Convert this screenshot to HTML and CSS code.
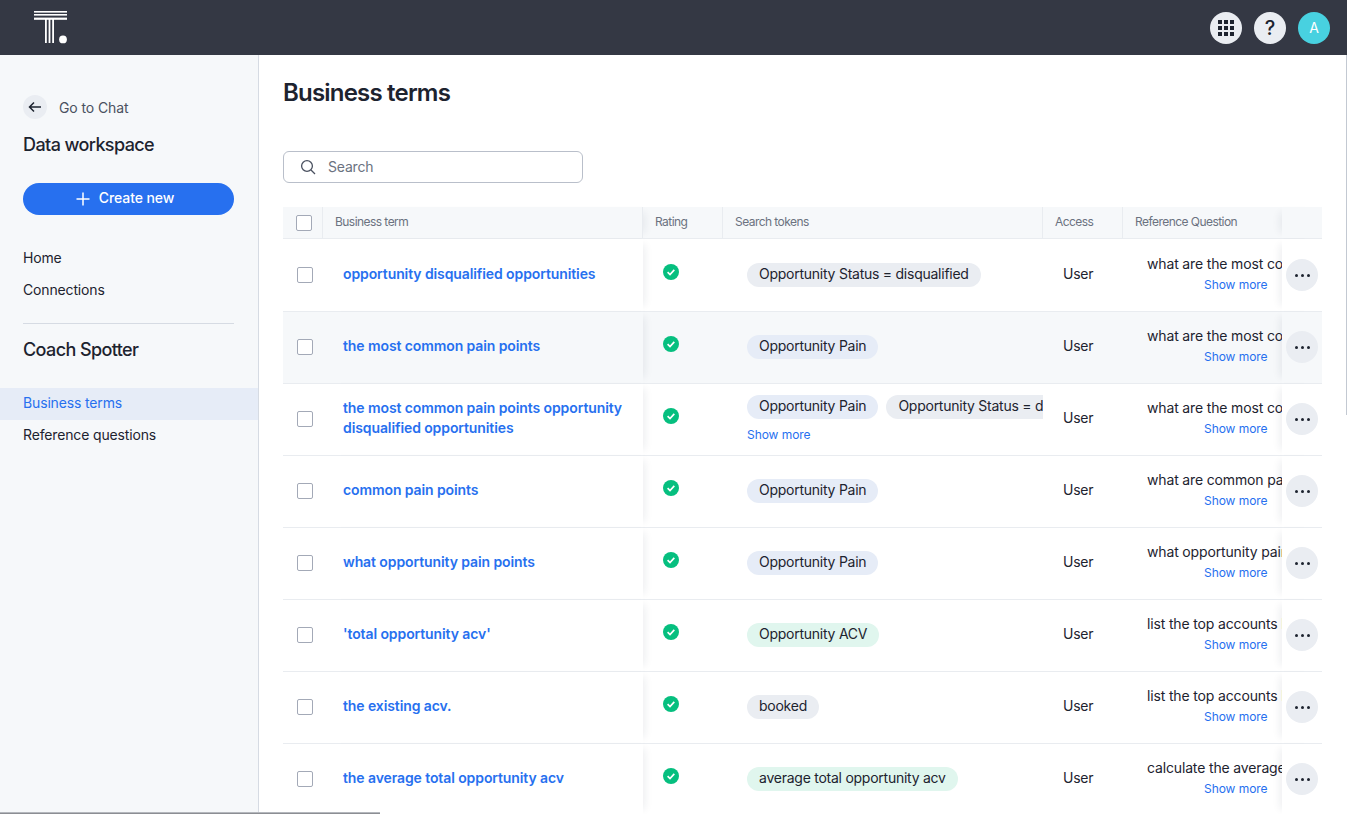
FILE: index.html
```html
<!DOCTYPE html>
<html lang="en">
<head>
  <meta charset="UTF-8" />
  <title>Business terms</title>
  <link rel="stylesheet" href="styles.css">
</head>
<body>

<!-- Top bar -->
<header class="topbar">
  <svg class="logo" width="34" height="34" viewBox="0 0 34 34">
    <rect x="0" y="0" width="33" height="1.6" fill="#fff"/>
    <rect x="0" y="3" width="33" height="1.6" fill="#fff"/>
    <rect x="0" y="6.6" width="33" height="2.2" fill="#fff"/>
    <rect x="11" y="8" width="1.8" height="24" fill="#fff"/>
    <rect x="14.6" y="8" width="1.8" height="24" fill="#fff"/>
    <rect x="18.2" y="8" width="1.8" height="24" fill="#fff"/>
    <circle cx="29" cy="28.4" r="3.9" fill="#fff"/>
  </svg>
  <div class="topbar-actions">
    <div class="round-btn">
      <svg width="18" height="18" viewBox="0 0 18 18" fill="#1d232f">
        <rect x="1" y="1" width="4" height="4"/><rect x="7" y="1" width="4" height="4"/><rect x="13" y="1" width="4" height="4"/>
        <rect x="1" y="7" width="4" height="4"/><rect x="7" y="7" width="4" height="4"/><rect x="13" y="7" width="4" height="4"/>
        <rect x="1" y="13" width="4" height="4"/><rect x="7" y="13" width="4" height="4"/><rect x="13" y="13" width="4" height="4"/>
      </svg>
    </div>
    <div class="round-btn help">?</div>
    <div class="round-btn avatar">A</div>
  </div>
</header>

<div class="layout">
  <!-- Sidebar -->
  <aside class="sidebar">
    <div class="back-row">
      <span class="back-btn">
        <svg width="14" height="12" viewBox="0 0 14 12" fill="none" stroke="#1d232f" stroke-width="1.5">
          <path d="M13 6H1.5M6 1.5 1.5 6 6 10.5"/>
        </svg>
      </span>
      <span>Go to Chat</span>
    </div>
    <h2 class="side-title">Data workspace</h2>
    <button class="create-btn">
      <svg width="14" height="14" viewBox="0 0 14 14" stroke="#fff" stroke-width="1.5"><path d="M7 0.5v13M0.5 7h13"/></svg>
      <span>Create new</span>
    </button>
    <nav class="side-nav">
      <a>Home</a>
      <a>Connections</a>
    </nav>
    <div class="side-divider"></div>
    <h2 class="side-title coach">Coach Spotter</h2>
    <nav class="side-nav sub">
      <a class="active">Business terms</a>
      <a>Reference questions</a>
    </nav>
  </aside>

  <!-- Content -->
  <main class="content">
    <h1>Business terms</h1>
    <div class="search">
      <svg width="16" height="16" viewBox="0 0 16 16" fill="none" stroke="#4a5160" stroke-width="1.3">
        <circle cx="7" cy="7" r="5.4"/><path d="M11 11l4 4"/>
      </svg>
      <span>Search</span>
    </div>

    <div class="table">
      <div class="row head">
        <div class="cell c-check"><span class="checkbox"></span></div>
        <div class="cell c-term">Business term</div>
        <div class="cell c-rating">Rating</div>
        <div class="cell c-tokens">Search tokens</div>
        <div class="cell c-access">Access</div>
        <div class="cell c-ref">Reference Question</div>
        <div class="cell c-more"></div>
      </div>

      <div class="row">
        <div class="cell c-check"><span class="checkbox"></span></div>
        <div class="cell c-term"><a>opportunity disqualified opportunities</a></div>
        <div class="cell c-rating"><svg class="ok" viewBox="0 0 16 16"><circle cx="8" cy="8" r="8" fill="#06bf7f"/><path d="M4.6 8.2l2.4 2.3 4.3-4.6" fill="none" stroke="#fff" stroke-width="1.7"/></svg></div>
        <div class="cell c-tokens"><div class="chips"><span class="chip">Opportunity Status = disqualified</span></div></div>
        <div class="cell c-access">User</div>
        <div class="cell c-ref"><div class="ref-text">what are the most common pain points for disqualified opportunities</div><a class="more-link">Show more</a></div>
        <div class="cell c-more"><span class="dots"><i></i><i></i><i></i></span></div>
      </div>

      <div class="row hover">
        <div class="cell c-check"><span class="checkbox"></span></div>
        <div class="cell c-term"><a>the most common pain points</a></div>
        <div class="cell c-rating"><svg class="ok" viewBox="0 0 16 16"><circle cx="8" cy="8" r="8" fill="#06bf7f"/><path d="M4.6 8.2l2.4 2.3 4.3-4.6" fill="none" stroke="#fff" stroke-width="1.7"/></svg></div>
        <div class="cell c-tokens"><div class="chips"><span class="chip blue">Opportunity Pain</span></div></div>
        <div class="cell c-access">User</div>
        <div class="cell c-ref"><div class="ref-text">what are the most common pain points</div><a class="more-link">Show more</a></div>
        <div class="cell c-more"><span class="dots"><i></i><i></i><i></i></span></div>
      </div>

      <div class="row">
        <div class="cell c-check"><span class="checkbox"></span></div>
        <div class="cell c-term"><a>the most common pain points opportunity disqualified opportunities</a></div>
        <div class="cell c-rating"><svg class="ok" viewBox="0 0 16 16"><circle cx="8" cy="8" r="8" fill="#06bf7f"/><path d="M4.6 8.2l2.4 2.3 4.3-4.6" fill="none" stroke="#fff" stroke-width="1.7"/></svg></div>
        <div class="cell c-tokens"><div class="chips"><span class="chip blue">Opportunity Pain</span><span class="chip">Opportunity Status = disqualified</span></div><a class="more-link">Show more</a></div>
        <div class="cell c-access">User</div>
        <div class="cell c-ref"><div class="ref-text">what are the most common pain points</div><a class="more-link">Show more</a></div>
        <div class="cell c-more"><span class="dots"><i></i><i></i><i></i></span></div>
      </div>

      <div class="row">
        <div class="cell c-check"><span class="checkbox"></span></div>
        <div class="cell c-term"><a>common pain points</a></div>
        <div class="cell c-rating"><svg class="ok" viewBox="0 0 16 16"><circle cx="8" cy="8" r="8" fill="#06bf7f"/><path d="M4.6 8.2l2.4 2.3 4.3-4.6" fill="none" stroke="#fff" stroke-width="1.7"/></svg></div>
        <div class="cell c-tokens"><div class="chips"><span class="chip blue">Opportunity Pain</span></div></div>
        <div class="cell c-access">User</div>
        <div class="cell c-ref"><div class="ref-text">what are common pain points</div><a class="more-link">Show more</a></div>
        <div class="cell c-more"><span class="dots"><i></i><i></i><i></i></span></div>
      </div>

      <div class="row">
        <div class="cell c-check"><span class="checkbox"></span></div>
        <div class="cell c-term"><a>what opportunity pain points</a></div>
        <div class="cell c-rating"><svg class="ok" viewBox="0 0 16 16"><circle cx="8" cy="8" r="8" fill="#06bf7f"/><path d="M4.6 8.2l2.4 2.3 4.3-4.6" fill="none" stroke="#fff" stroke-width="1.7"/></svg></div>
        <div class="cell c-tokens"><div class="chips"><span class="chip blue">Opportunity Pain</span></div></div>
        <div class="cell c-access">User</div>
        <div class="cell c-ref"><div class="ref-text">what opportunity pain points</div><a class="more-link">Show more</a></div>
        <div class="cell c-more"><span class="dots"><i></i><i></i><i></i></span></div>
      </div>

      <div class="row">
        <div class="cell c-check"><span class="checkbox"></span></div>
        <div class="cell c-term"><a>'total opportunity acv'</a></div>
        <div class="cell c-rating"><svg class="ok" viewBox="0 0 16 16"><circle cx="8" cy="8" r="8" fill="#06bf7f"/><path d="M4.6 8.2l2.4 2.3 4.3-4.6" fill="none" stroke="#fff" stroke-width="1.7"/></svg></div>
        <div class="cell c-tokens"><div class="chips"><span class="chip green">Opportunity ACV</span></div></div>
        <div class="cell c-access">User</div>
        <div class="cell c-ref"><div class="ref-text">list the top accounts by total opportunity acv</div><a class="more-link">Show more</a></div>
        <div class="cell c-more"><span class="dots"><i></i><i></i><i></i></span></div>
      </div>

      <div class="row">
        <div class="cell c-check"><span class="checkbox"></span></div>
        <div class="cell c-term"><a>the existing acv.</a></div>
        <div class="cell c-rating"><svg class="ok" viewBox="0 0 16 16"><circle cx="8" cy="8" r="8" fill="#06bf7f"/><path d="M4.6 8.2l2.4 2.3 4.3-4.6" fill="none" stroke="#fff" stroke-width="1.7"/></svg></div>
        <div class="cell c-tokens"><div class="chips"><span class="chip">booked</span></div></div>
        <div class="cell c-access">User</div>
        <div class="cell c-ref"><div class="ref-text">list the top accounts by existing acv</div><a class="more-link">Show more</a></div>
        <div class="cell c-more"><span class="dots"><i></i><i></i><i></i></span></div>
      </div>

      <div class="row">
        <div class="cell c-check"><span class="checkbox"></span></div>
        <div class="cell c-term"><a>the average total opportunity acv</a></div>
        <div class="cell c-rating"><svg class="ok" viewBox="0 0 16 16"><circle cx="8" cy="8" r="8" fill="#06bf7f"/><path d="M4.6 8.2l2.4 2.3 4.3-4.6" fill="none" stroke="#fff" stroke-width="1.7"/></svg></div>
        <div class="cell c-tokens"><div class="chips"><span class="chip green">average total opportunity acv</span></div></div>
        <div class="cell c-access">User</div>
        <div class="cell c-ref"><div class="ref-text">calculate the average total opportunity acv</div><a class="more-link">Show more</a></div>
        <div class="cell c-more"><span class="dots"><i></i><i></i><i></i></span></div>
      </div>
    </div>
  </main>
</div>

<div class="bottom-edge"></div>
<div class="scroll-edge"></div>

</body>
</html>
```

FILE: styles.css
```css
* {
  box-sizing: border-box;
}

html, body {
  margin: 0;
  padding: 0;
  width: 100%;
  height: 814px;
  overflow: hidden;
  font-family: Inter, 'Noto Sans', sans-serif;
  color: #1d232f;
  background: #fff;
}

h1, h2 {
  margin: 0;
}

.topbar {
  height: 55px;
  background: #343844;
  display: flex;
  align-items: center;
  justify-content: space-between;
  padding: 0 17px 0 34px;
}

.logo {
  margin-top: 1px;
}

.topbar-actions {
  display: flex;
  gap: 12px;
}

.round-btn {
  width: 32px;
  height: 32px;
  border-radius: 50%;
  background: #eaedf2;
  display: flex;
  align-items: center;
  justify-content: center;
}

.help {
  font-size: 20px;
  font-weight: 500;
}

.avatar {
  background: #48d1e0;
  color: #fff;
  font-size: 14px;
}

.layout {
  display: flex;
  height: 759px;
}

/* Sidebar */
.sidebar {
  width: 259px;
  flex: none;
  background: #f6f8fa;
  border-right: 1px solid #d6dbe3;
  padding-top: 40px;
}

.back-row {
  display: flex;
  align-items: center;
  gap: 12px;
  margin-left: 23px;
  font-size: 14px;
  color: #4a5160;
  letter-spacing: -0.1px;
}

.back-btn {
  width: 24px;
  height: 24px;
  border-radius: 50%;
  background: #eaedf2;
  display: flex;
  align-items: center;
  justify-content: center;
}

.side-title {
  font-size: 18px;
  font-weight: 500;
  line-height: 24px;
  margin: 14px 0 0 23px;
  letter-spacing: -0.6px;
}

.create-btn {
  display: flex;
  align-items: center;
  justify-content: center;
  gap: 9px;
  width: 211px;
  height: 32px;
  margin: 26px 0 0 23px;
  padding: 0 7px 0 0;
  border: none;
  border-radius: 16px;
  background: #2770ef;
  color: #fff;
  font-family: inherit;
  font-size: 14px;
  font-weight: 500;
  letter-spacing: -0.1px;
}

.create-btn span {
  margin-bottom: 3px;
}

.side-nav {
  margin-top: 27px;
}

.side-nav a {
  display: block;
  height: 32px;
  line-height: 32px;
  padding-left: 23px;
  font-size: 14px;
  letter-spacing: -0.15px;
}

.side-nav.sub a {
  line-height: 30px;
}

.side-nav a.active {
  background: #e6ecf7;
  color: #2770ef;
}

.side-divider {
  height: 1px;
  background: #d6dbe3;
  margin: 17px 24px 0 23px;
}

.coach {
  margin-top: 14px;
}

.side-nav.sub {
  margin-top: 26px;
}

/* Content */
.content {
  flex: 1;
  min-width: 0;
  padding: 0 25px 0 24px;
}

.content h1 {
  font-size: 24px;
  font-weight: 600;
  line-height: 32px;
  margin-top: 22px;
  letter-spacing: -0.8px;
}

.search {
  width: 300px;
  height: 32px;
  margin-top: 42px;
  border: 1px solid #b9bfca;
  border-radius: 6px;
  display: flex;
  align-items: center;
  gap: 12px;
  padding: 0 0 2px 16px;
  font-size: 14px;
  color: #6b7280;
  letter-spacing: -0.2px;
}

.search svg {
  margin-top: 2px;
}

.table {
  margin-top: 24px;
  width: 1039px;
}

.row {
  display: flex;
  height: 72px;
  background: #fff;
  box-shadow: inset 0 1px 0 #e9ecf0;
}

.row.hover {
  background: #f6f8fa;
}

.row.head {
  height: 32px;
  background: #f6f8fa;
  box-shadow: inset 0 -1px 0 #e9ecf0;
  color: #6b7280;
  letter-spacing: -0.55px;
}

.head + .row {
  box-shadow: none;
}

.cell {
  display: flex;
  align-items: center;
  flex: none;
  font-size: 14px;
}

.head .cell {
  font-size: 12px;
  padding: 0 0 2px 12px;
  border-right: 1px solid #e9ecf0;
  height: 31px;
}

.c-check {
  width: 40px;
  padding-left: 14px;
}

.head .c-check {
  padding: 0 0 0 13px;
}

.c-term {
  width: 320px;
  padding: 0 16px 2px 20px;
  line-height: 20px;
  letter-spacing: -0.1px;
  box-shadow: 8px 0 8px -6px rgba(30, 40, 60, 0.08);
}

.head .c-term {
  letter-spacing: inherit;
}

.c-term a {
  color: #2770ef;
  font-weight: 600;
}

.c-rating {
  width: 80px;
  padding-left: 20px;
}

.ok {
  width: 16px;
  height: 16px;
  margin-top: -6px;
}

.c-tokens {
  width: 320px;
  padding-left: 24px;
  flex-direction: column;
  align-items: flex-start;
  justify-content: center;
  overflow: hidden;
}

.head .c-tokens {
  flex-direction: row;
  align-items: center;
  justify-content: flex-start;
}

.chips {
  display: flex;
  gap: 8px;
  white-space: nowrap;
}

.chip {
  height: 24px;
  line-height: 22px;
  padding: 0 12px;
  border-radius: 12px;
  background: #eaedf2;
  letter-spacing: -0.25px;
}

.chip.blue {
  background: #e6ecf7;
}

.chip.green {
  background: #e0f6ee;
}

.more-link {
  color: #2770ef;
  font-size: 12px;
  line-height: 16px;
  letter-spacing: -0.05px;
}

.c-tokens .more-link {
  margin-top: 8px;
}

.c-access {
  width: 80px;
  padding: 0 0 4px 20px;
  letter-spacing: -0.25px;
}

.head .c-access {
  letter-spacing: -0.55px;
}

.c-ref {
  width: 159px;
  padding: 0 0 4px 24px;
  flex-direction: column;
  align-items: flex-start;
  justify-content: center;
  overflow: hidden;
}

.head .c-ref {
  flex-direction: row;
  align-items: center;
  justify-content: flex-start;
  border-right: none;
}

.ref-text {
  white-space: nowrap;
  line-height: 20px;
  letter-spacing: -0.15px;
}

.c-ref .more-link {
  margin: 3px 0 0 57px;
}

.c-more {
  width: 40px;
  justify-content: center;
  box-shadow: -8px 0 8px -6px rgba(30, 40, 60, 0.08);
}

.head .c-more {
  border-right: none;
  padding: 0;
}

.dots {
  width: 32px;
  height: 32px;
  border-radius: 50%;
  background: #eaedf2;
  display: flex;
  align-items: center;
  justify-content: center;
  gap: 3px;
}

.dots i {
  width: 3px;
  height: 3px;
  border-radius: 50%;
  background: #1d232f;
}

.checkbox {
  display: block;
  width: 16px;
  height: 16px;
  border: 1px solid #a3a9b7;
  border-radius: 2px;
  background: #fff;
}

/* Window edges visible in the capture */
.bottom-edge {
  position: absolute;
  left: 0;
  bottom: 0;
  width: 380px;
  height: 2px;
  background: linear-gradient(#c9ccd2, #77797e);
}

.scroll-edge {
  position: absolute;
  top: 55px;
  right: 0;
  width: 1px;
  height: 360px;
  background: #c3c9d2;
}
```
